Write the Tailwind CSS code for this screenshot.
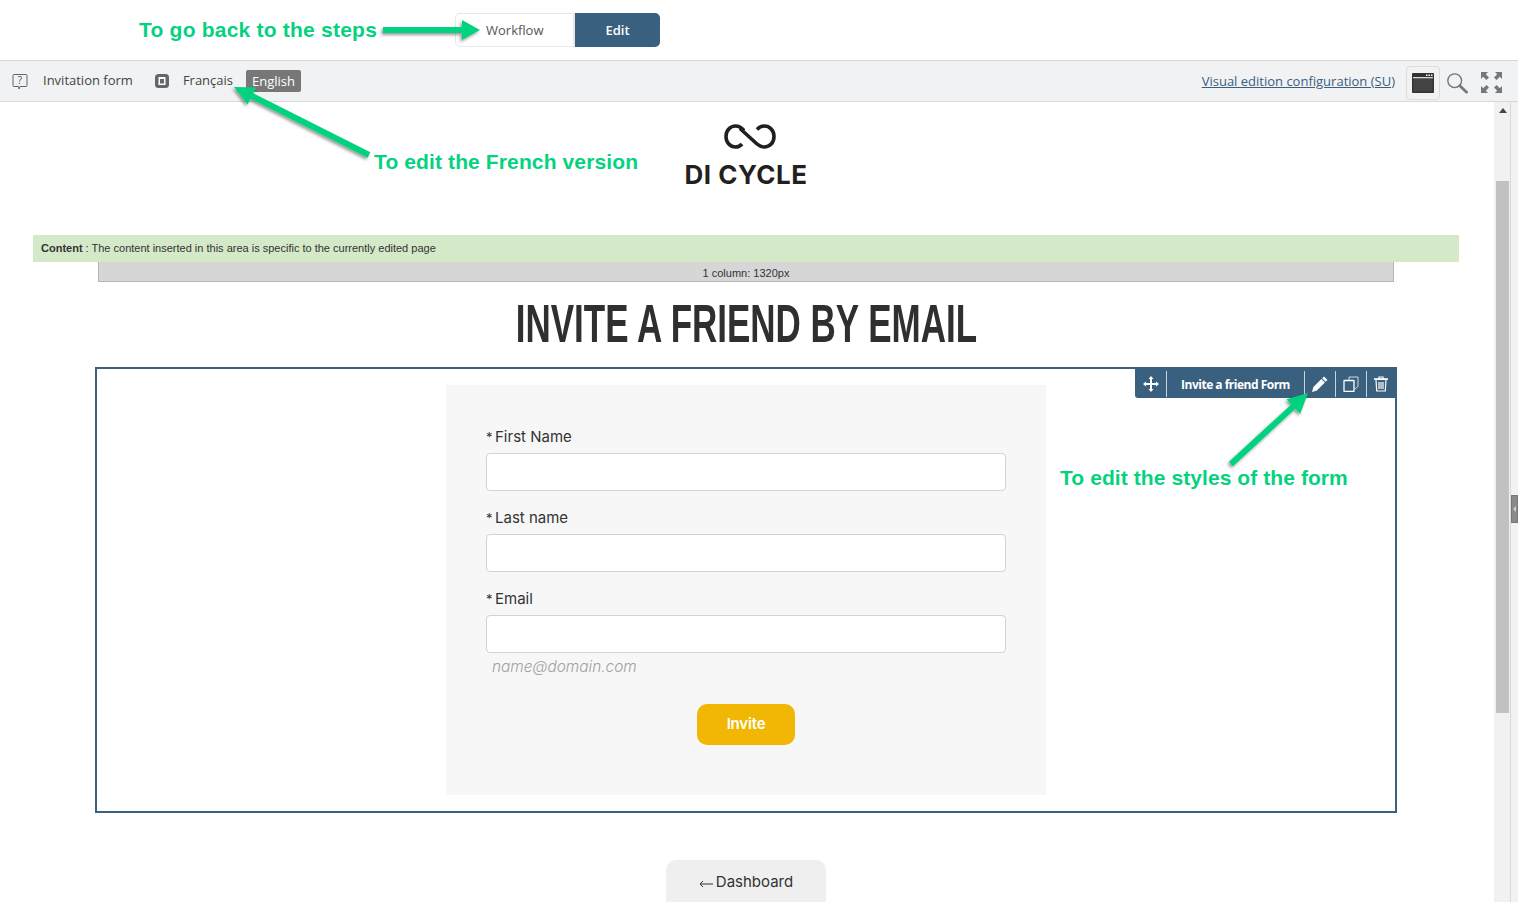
<!DOCTYPE html>
<html lang="en">
<head>
    <meta charset="UTF-8">
    <meta name="viewport" content="width=device-width, initial-scale=1.0">
    <title>Invite a friend form - visual edition</title>
    <script src="https://cdn.jsdelivr.net/npm/@tailwindcss/browser@4"></script>
</head>
<body class="bg-white font-['Open_Sans',sans-serif] overflow-hidden">
<div class="relative w-[1518px] h-[902px] overflow-hidden">

    <!-- Top step bar -->
    <div class="h-[60px] pt-[13px] pl-[455px]">
        <div class="flex h-[34px] w-[205px]">
            <div class="w-[120px] border border-[#e8e8e8] border-r-2 rounded-l-[5px] pl-[30px] text-[13px] leading-[33px] text-[#555]">Workflow</div>
            <div class="w-[85px] bg-[#3a6080] rounded-r-[5px] text-center text-[13px] font-semibold leading-[34px] text-white">Edit</div>
        </div>
    </div>

    <!-- Edition toolbar -->
    <div class="h-[42px] bg-[#f1f2f4] border-y border-[#d8d8d8] flex items-center pl-3 pr-[16px] text-[13px] text-[#444]">
        <svg class="w-4 h-[18px] mt-[1px]" viewBox="0 0 16 18" fill="none" stroke="#666" stroke-width="1">
            <path d="M2 1.5h12a1 1 0 0 1 1 1v10a1 1 0 0 1-1 1H8l-1 2.5-.5-2.5H2a1 1 0 0 1-1-1v-10a1 1 0 0 1 1-1z"/>
            <text x="8" y="11" text-anchor="middle" font-size="10" fill="#555" stroke="none" font-family="Open Sans">?</text>
        </svg>
        <span class="ml-[15px]">Invitation form</span>
        <svg class="w-[14px] h-[14px] ml-[22px]" viewBox="0 0 14 14">
            <rect width="14" height="14" rx="3.5" fill="#666"/>
            <rect x="3.5" y="3" width="7" height="8" fill="#fff"/>
            <rect x="5" y="5" width="4" height="4.5" fill="#666"/>
        </svg>
        <span class="ml-[14px]">Français</span>
        <span class="ml-[13px] h-[22px] px-[6px] bg-[#777] rounded-[2px] text-white leading-[23px]">English</span>
        <a class="ml-auto underline text-[#3a6080] mr-[11px] text-[13px] mt-[1px]">Visual edition configuration (SU)</a>
        <div class="w-[34px] h-[34px] mt-[3px] border border-[#dcdcdc] rounded-[4px] flex items-center justify-center">
            <svg class="w-[22px] h-[20px]" viewBox="0 0 22 20">
                <rect width="22" height="20" rx="1" fill="#333"/>
                <rect x="1.5" y="5" width="19" height="13.5" fill="#444"/>
                <rect x="1" y="4.2" width="20" height="1" fill="#fff"/>
                <rect x="14" y="1.5" width="1.5" height="1.5" fill="#fff"/>
                <rect x="16.5" y="1.5" width="1.5" height="1.5" fill="#fff"/>
                <rect x="19" y="1.5" width="1.5" height="1.5" fill="#fff"/>
            </svg>
        </div>
        <svg class="w-[22px] h-[22px] ml-[6px] mt-[3px]" viewBox="0 0 24 24" fill="none" stroke="#777">
            <circle cx="9.5" cy="9.5" r="7.5" stroke-width="1.5"/>
            <path d="M15 15l7.5 7" stroke-width="3" stroke-linecap="round"/>
        </svg>
        <svg class="w-[21px] h-[21px] ml-[13px] mt-[2px]" viewBox="0 0 21 21" fill="#777">
            <path d="M0 0h7L4.8 2.2 8 5.400 5.400 8 2.200 4.800 0 7z"/>
            <path d="M21 0h-7l2.200 2.200L13 5.400 15.600 8l3.200-3.200L21 7z"/>
            <path d="M0 21h7l-2.200-2.200L8 15.600 5.400 13l-3.200 3.200L0 14z"/>
            <path d="M21 21h-7l2.200-2.200-3.200-3.200 2.600-2.600 3.200 3.200L21 14z"/>
        </svg>
    </div>

    <div class="flex h-[800px]">
        <!-- Edited page -->
        <main class="w-[1492px] mr-[2px] flex flex-col items-center">
            <svg class="w-[52px] h-[26px] mt-[22px] ml-[8px] shrink-0" viewBox="0 0 52 26" fill="none" stroke="#231f20" stroke-width="3.6">
                <path d="M20 6.5C17.500 3.500 14.500 2 11.500 2 6.200 2 2 6.300 2 12.500S6.200 23 11.500 23c3 0 5-1.200 6.500-3M16 4.500 33 20c2.500 2.200 4.800 3 7.200 3C45.800 23 50 18.800 50 12.500S45.800 2 40.200 2c-3 0-5.200 1.300-7.200 3.500"/>
            </svg>
            <div class="mt-[10px] h-[29px] shrink-0 text-[26px] leading-[30px] font-bold text-[#231f20] font-['Inter',sans-serif] tracking-[0.5px]">DI CYCLE</div>

            <div class="mt-[46px] w-[1426px] h-[27px] shrink-0 bg-[#d3e9c7] pl-2 font-['Liberation_Sans',sans-serif] text-[11px] leading-[27px] text-[#333] self-start ml-[33px]"><b>Content</b> : The content inserted in this area is specific to the currently edited page</div>
            <div class="w-[1296px] h-[20px] shrink-0 bg-[#d6d6d6] border border-t-0 border-[#b4b4b4] text-center font-['Liberation_Sans',sans-serif] text-[11px] leading-[22px] text-[#333]">1 column: 1320px</div>

            <h1 class="mt-[12px] h-[73px] shrink-0 whitespace-nowrap text-[53px] leading-[60px] text-[#2f2f2f] font-['Liberation_Sans',sans-serif] font-bold scale-x-[0.66]">INVITE A FRIEND BY EMAIL</h1>

            <!-- Selected form block -->
            <section class="relative w-[1302px] h-[446px] shrink-0 border-2 border-[#3a6080] pt-4 flex justify-center">
                <div class="absolute top-0 right-0 h-[29px] w-[260px] bg-[#3a6080] rounded-bl-[3px] flex items-center text-white">
                    <div class="w-[32px] h-[26px] border-r border-[#c6d2dc] flex items-center justify-center">
                        <svg class="w-4 h-4" viewBox="0 0 16 16" fill="#fff">
                            <path d="M8 0l2.500 3H9v4h4V5.500L16 8l-3 2.500V9H9v4h1.500L8 16l-2.500-3H7V9H3v1.500L0 8l3-2.500V7h4V3H5.500z"/>
                        </svg>
                    </div>
                    <div class="w-[138px] h-[26px] border-r border-[#c6d2dc] text-center text-[12px] font-bold leading-[28px] tracking-[-0.5px] font-['Open_Sans',sans-serif]">Invite a friend Form</div>
                    <div class="w-[31px] h-[26px] border-r border-[#c6d2dc] flex items-center justify-center">
                        <svg class="w-4 h-4" viewBox="0 0 16 16" fill="#fff">
                            <path d="M12 .5l3.500 3.500-1.800 1.800-3.500-3.500zM9.400 3.100l3.500 3.500-8 8L0 16l1.400-4.900z"/>
                        </svg>
                    </div>
                    <div class="w-[31px] h-[26px] border-r border-[#c6d2dc] flex items-center justify-center">
                        <svg class="w-4 h-4" viewBox="0 0 16 16" fill="none" stroke="#fff">
                            <path d="M6 4V1h9v9.500l-3 2.500" stroke-opacity="0.75"/>
                            <rect x="1" y="4.500" width="10" height="11" rx="0.5" fill="#3a6080" stroke-width="1.300"/>
                        </svg>
                    </div>
                    <div class="w-[28px] flex items-center justify-center">
                        <svg class="w-[14px] h-4" viewBox="0 0 14 16" fill="none" stroke="#fff" stroke-width="1.200">
                            <path d="M0 3h14" stroke-width="1.600"/>
                            <path d="M5 3V1h4v2"/>
                            <path d="M2 3.500l.7 11.500h8.600l.7-11.500z"/>
                            <path d="M5 6v7M7 6v7M9 6v7"/>
                        </svg>
                    </div>
                </div>

                <form class="w-[600px] h-[410px] bg-[#f7f7f7] px-10 pt-[42px] text-[15px] text-[#333] font-['Inter',sans-serif]">
                    <label class="block h-[26px] leading-[20px]"><span class="inline-block w-[9px] text-[13px]">*</span>First Name</label>
                    <input class="block w-full h-[38px] bg-white border border-[#ced4da] rounded-[4px]">
                    <label class="block h-[26px] mt-[17px] leading-[20px]"><span class="inline-block w-[9px] text-[13px]">*</span>Last name</label>
                    <input class="block w-full h-[38px] bg-white border border-[#ced4da] rounded-[4px]">
                    <label class="block h-[26px] mt-[17px] leading-[20px]"><span class="inline-block w-[9px] text-[13px]">*</span>Email</label>
                    <input class="block w-full h-[38px] bg-white border border-[#ced4da] rounded-[4px]">
                    <p class="mt-[5px] ml-[6px] h-[18px] text-[15.400px] leading-[18px] italic font-light text-[#a0a0a0]">name@domain.com</p>
                    <button type="button" class="block mx-auto mt-[28px] w-[98px] h-[41px] bg-[#f2b705] rounded-[10px] text-white text-[15px] font-semibold tracking-[-0.2px]">Invite</button>
                </form>
            </section>

            <button type="button" class="mt-[47px] w-[160px] h-[50px] shrink-0 bg-[#efefef] rounded-[10px] text-[15px] text-[#333] font-['Inter',sans-serif] pb-[5px] flex items-center justify-center gap-[3px]">
                <svg class="w-[14px] h-[8px] mt-[2px]" viewBox="0 0 14 8" fill="none" stroke="#333"><path d="M14 4H1M4 1L1 4l3 3"/></svg>
                <span>Dashboard</span>
            </button>
        </main>

        <!-- Scrollbar -->
        <div class="w-[17px] bg-[#f1f1f1] border-r border-[#d8d8d8] pl-[2px] pr-[1px] flex flex-col">
            <div class="mt-[6px] ml-[3px] w-0 h-0 border-x-[4px] border-x-transparent border-b-[5px] border-b-[#444]"></div>
            <div class="mt-[68px] h-[532px] w-[13px] bg-[#c1c1c1]"></div>
        </div>

        <!-- Side panel handle -->
        <div class="flex-1 bg-[#f1f2f4] pt-[393px]">
            <div class="h-[28px] bg-[#8a8a8a] border border-[#777] flex items-center justify-center">
                <div class="w-0 h-0 border-y-[3px] border-y-transparent border-r-[3px] border-r-[#ccc]"></div>
            </div>
        </div>
    </div>

    <!-- Tutorial annotations drawn over the screenshot -->
    <svg class="absolute inset-0 w-[1518px] h-[902px] pointer-events-none" viewBox="0 0 1518 902">
        <defs>
            <filter id="soft" x="-10%" y="-30%" width="120%" height="160%">
                <feDropShadow dx="-1.500" dy="2" stdDeviation="1.500" flood-color="#000" flood-opacity="0.4"/>
            </filter>
        </defs>
        <g fill="#05d27f" filter="url(#soft)">
            <path d="M383 27h79v-7l18 10-18 10v-7h-79z"/>
            <path d="M370.350 152.300L253.250 93.300 256.200 87.500 234 87 247.600 104.500 250.550 98.700 367.650 157.700z"/>
            <path d="M1233 466.200L1295.300 408.800 1300.100 413.900 1308 393 1286.500 399.200 1291.300 404.400 1229 461.800z"/>
        </g>
    </svg>
    <span class="absolute left-[139px] top-[16px] text-[21px] leading-[28px] font-bold text-[#05d27f] font-['Liberation_Sans',sans-serif] tracking-[0.22px]">To go back to the steps</span>
    <span class="absolute left-[374px] top-[148px] text-[21px] leading-[28px] font-bold text-[#05d27f] font-['Liberation_Sans',sans-serif] tracking-[0.12px]">To edit the French version</span>
    <span class="absolute left-[1060px] top-[464px] text-[21px] leading-[28px] font-bold text-[#05d27f] font-['Liberation_Sans',sans-serif] tracking-[0.08px]">To edit the styles of the form</span>
</div>
</body>
</html>
